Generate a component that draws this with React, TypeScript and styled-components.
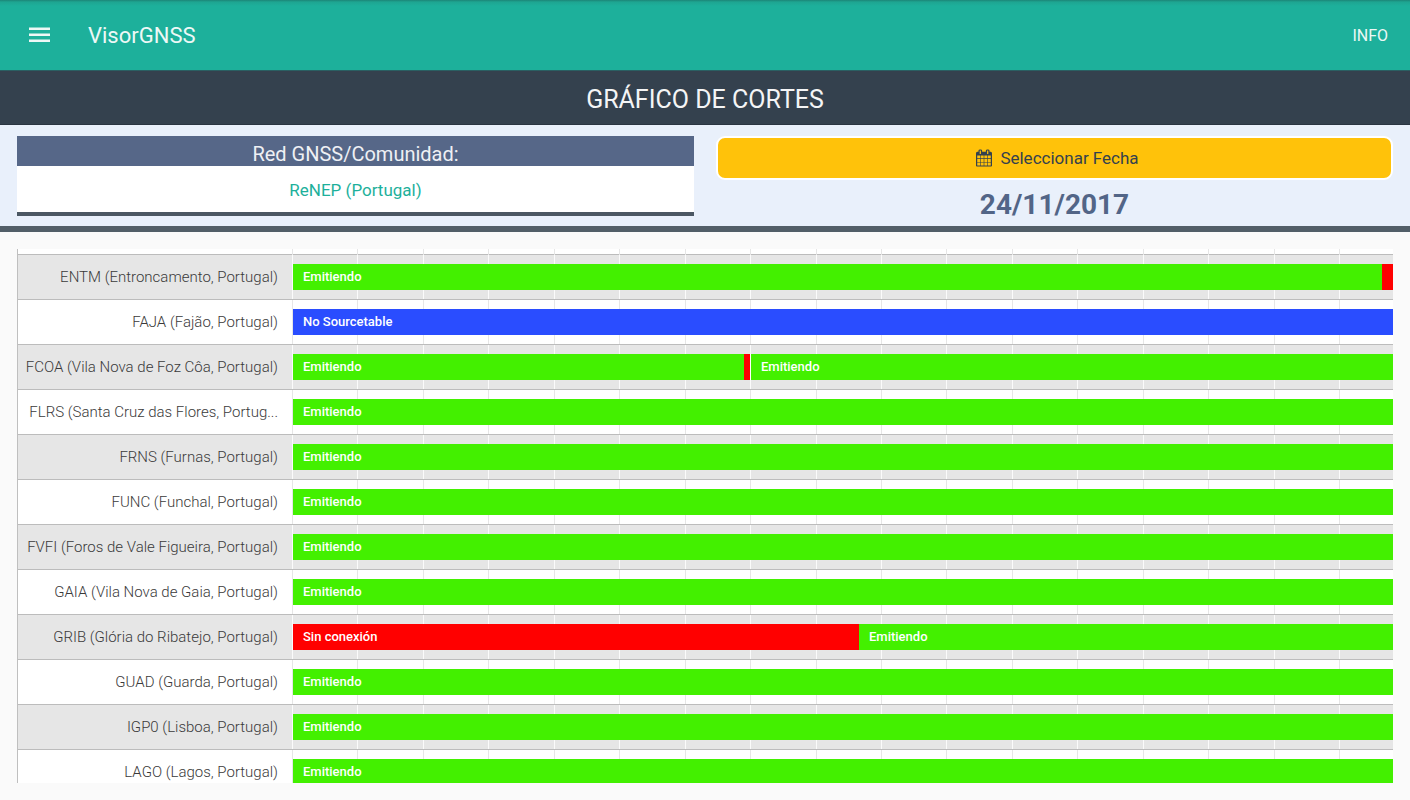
import React from "react";
import styled, { createGlobalStyle } from "styled-components";

const GlobalStyle = createGlobalStyle`
  * { box-sizing: border-box; }
  body {
    margin: 0;
    background: #fafafa;
    font-family: Roboto, "Liberation Sans", sans-serif;
  }
`;

const Page = styled.div`
  display: flex;
  flex-direction: column;
  height: 100vh;
`;

const Toolbar = styled.header`
  flex: none;
  display: flex;
  align-items: center;
  height: 70px;
  padding: 0 22px 0 28px;
  color: #edf8f6;
  background: linear-gradient(#1c8577 0, #1ea591 2px, #1db09b 6px);
`;

const ToolbarButton = styled.button`
  display: flex;
  padding: 0;
  border: 0;
  background: none;
  color: inherit;
  font: inherit;
  font-size: 16px;
  cursor: pointer;
`;

const AppName = styled.span`
  flex: 1;
  margin-left: 37px;
  padding-top: 2px;
  font-size: 22px;
  line-height: 28px;
`;

const PageTitle = styled.h1`
  flex: none;
  margin: 0;
  padding: 2px 0 0;
  height: 55px;
  border-top: 1px solid #2a5f62;
  border-bottom: 1px solid #2a3541;
  background: #34414e;
  color: #f4f5f6;
  font-size: 25px;
  font-weight: 400;
  line-height: 54px;
  text-align: center;
`;

const Filters = styled.section`
  flex: none;
  display: grid;
  grid-template-columns: 1fr 1fr;
  gap: 22px;
  padding: 11px 17px 10px;
  border-bottom: 6px solid #525e68;
  background: #e9f0fb;
`;

const NetworkField = styled.div`
  display: flex;
  flex-direction: column;
  border-bottom: 4px solid #4b5763;
  background: #fff;
`;

const NetworkLabel = styled.label`
  height: 30px;
  padding-top: 3px;
  background: #566788;
  color: #eef0f4;
  font-size: 20px;
  line-height: 30px;
  text-align: center;
`;

const NetworkSelect = styled.select`
  appearance: none;
  height: 46px;
  padding: 2px 0 0;
  border: 0;
  background: #fff;
  color: #1db09b;
  font: inherit;
  font-size: 17px;
  text-align: center;
  text-align-last: center;
`;

const DateField = styled.div`
  display: flex;
  flex-direction: column;
`;

const DateButton = styled.button`
  display: flex;
  align-items: center;
  justify-content: center;
  gap: 8px;
  height: 44px;
  padding: 0 0 0 6px;
  border: 2px solid #fff;
  border-radius: 9px;
  background: #ffc20a;
  color: #34414e;
  font: inherit;
  font-size: 17px;
  cursor: pointer;
`;

const SelectedDate = styled.strong`
  height: 36px;
  padding-top: 7px;
  color: #526587;
  font-size: 28px;
  font-weight: 700;
  line-height: 36px;
  text-align: center;
`;

const Chart = styled.main`
  flex: 1;
  min-height: 0;
  margin: 17px;
  overflow-y: auto;
  scrollbar-width: none;
  border-left: 1px solid #bfbfbf;
`;

const RowList = styled.ul`
  margin: 0;
  padding: 0;
  list-style: none;
`;

const Row = styled.li<{ $shaded: boolean }>`
  --line: ${(p) => (p.$shaded ? "#fbfbfb" : "#e6e6e6")};
  display: grid;
  grid-template-columns: 274px 1fr;
  height: 45px;
  border-top: 1px solid #bcbcbc;
  background: ${(p) => (p.$shaded ? "#e6e6e6" : "#fff")};
`;

const TopEdge = styled(Row).attrs({ as: "div", "aria-hidden": true })`
  height: 5px;
  border-top: 0;
`;

const StationName = styled.span`
  padding: 0 14px 0 2px;
  overflow: hidden;
  color: #3a3a3a;
  font-size: 15px;
  font-weight: 300;
  line-height: 44px;
  text-align: right;
  text-overflow: ellipsis;
  white-space: nowrap;
`;

const Track = styled.div`
  display: flex;
  padding: 9px 0 9px 1px;
  background: repeating-linear-gradient(
    to right,
    var(--line) 0 1px,
    transparent 1px 5.944%
  );
`;

type Status = "on" | "off" | "missing";

const statusColor: Record<Status, string> = {
  on: "#43f000",
  off: "#ff0000",
  missing: "#2a4dff",
};

const Bar = styled.span<{ $status: Status; $share: number; $gap?: boolean }>`
  flex: ${(p) => p.$share} 1 0;
  min-width: 0;
  overflow: hidden;
  border-right: ${(p) => (p.$gap ? "1px solid #fff" : "0")};
  background: ${(p) => statusColor[p.$status]};
  color: #fff;
  font-size: 13px;
  font-weight: 500;
  line-height: 26px;
  text-indent: 10px;
  white-space: nowrap;
`;

type Segment = { status: Status; share: number; text?: string; gap?: boolean };

const allDay: Segment[] = [{ status: "on", share: 1100, text: "Emitiendo" }];

const stations: { name: string; segments: Segment[] }[] = [
  {
    name: "ENTM (Entroncamento, Portugal)",
    segments: [
      { status: "on", share: 1089, text: "Emitiendo" },
      { status: "off", share: 11 },
    ],
  },
  {
    name: "FAJA (Fajão, Portugal)",
    segments: [{ status: "missing", share: 1100, text: "No Sourcetable" }],
  },
  {
    name: "FCOA (Vila Nova de Foz Côa, Portugal)",
    segments: [
      { status: "on", share: 451, text: "Emitiendo" },
      { status: "off", share: 6, gap: true },
      { status: "on", share: 642, text: "Emitiendo" },
    ],
  },
  { name: "FLRS (Santa Cruz das Flores, Portug...", segments: allDay },
  { name: "FRNS (Furnas, Portugal)", segments: allDay },
  { name: "FUNC (Funchal, Portugal)", segments: allDay },
  { name: "FVFI (Foros de Vale Figueira, Portugal)", segments: allDay },
  { name: "GAIA (Vila Nova de Gaia, Portugal)", segments: allDay },
  {
    name: "GRIB (Glória do Ribatejo, Portugal)",
    segments: [
      { status: "off", share: 566, text: "Sin conexión" },
      { status: "on", share: 534, text: "Emitiendo" },
    ],
  },
  { name: "GUAD (Guarda, Portugal)", segments: allDay },
  { name: "IGP0 (Lisboa, Portugal)", segments: allDay },
  { name: "LAGO (Lagos, Portugal)", segments: allDay },
];

const MenuIcon = () => (
  <svg width="23" height="18" viewBox="0 0 23 18" fill="currentColor" aria-hidden="true">
    <path d="M1 1.5h21v2.6H1zM1 7.5h21v2.6H1zM1 13.5h21v2.6H1z" />
  </svg>
);

const CalendarIcon = () => (
  <svg width="16" height="18" viewBox="64 0 1664 1792" fill="currentColor" aria-hidden="true">
    <path d="M192 1664h288v-288h-288v288zm352 0h320v-288h-320v288zm-352-352h288v-320h-288v320zm352 0h320v-320h-320v320zm-352-384h288v-288h-288v288zm736 736h320v-288h-320v288zm-384-736h320v-288h-320v288zm768 736h288v-288h-288v288zm-384-352h320v-320h-320v320zm-352-864v-288q0-13-9.5-22.5t-22.5-9.5h-64q-13 0-22.5 9.5t-9.5 22.5v288q0 13 9.5 22.5t22.5 9.5h64q13 0 22.5-9.5t9.5-22.5zm736 864h288v-320h-288v320zm-384-384h320v-288h-320v288zm384 0h288v-288h-288v288zm32-480v-288q0-13-9.5-22.5t-22.5-9.5h-64q-13 0-22.5 9.5t-9.5 22.5v288q0 13 9.5 22.5t22.5 9.5h64q13 0 22.5-9.5t9.5-22.5zm384-64v1280q0 52-38 90t-90 38h-1408q-52 0-90-38t-38-90v-1280q0-52 38-90t90-38h128v-96q0-66 47-113t113-47h64q66 0 113 47t47 113v96h384v-96q0-66 47-113t113-47h64q66 0 113 47t47 113v96h128q52 0 90 38t38 90z" />
  </svg>
);

export default function App() {
  return (
    <Page>
      <GlobalStyle />
      <Toolbar>
        <ToolbarButton type="button" aria-label="Menú">
          <MenuIcon />
        </ToolbarButton>
        <AppName>VisorGNSS</AppName>
        <ToolbarButton type="button">INFO</ToolbarButton>
      </Toolbar>
      <PageTitle>GRÁFICO DE CORTES</PageTitle>
      <Filters>
        <NetworkField>
          <NetworkLabel htmlFor="network">Red GNSS/Comunidad:</NetworkLabel>
          <NetworkSelect id="network">
            <option>ReNEP (Portugal)</option>
          </NetworkSelect>
        </NetworkField>
        <DateField>
          <DateButton type="button">
            <CalendarIcon />
            Seleccionar Fecha
          </DateButton>
          <SelectedDate>24/11/2017</SelectedDate>
        </DateField>
      </Filters>
      <Chart>
        <TopEdge $shaded={false}>
          <span />
          <Track />
        </TopEdge>
        <RowList>
          {stations.map((station, i) => (
            <Row key={station.name} $shaded={i % 2 === 0}>
              <StationName>{station.name}</StationName>
              <Track>
                {station.segments.map((s, j) => (
                  <Bar key={j} $status={s.status} $share={s.share} $gap={s.gap}>
                    {s.text}
                  </Bar>
                ))}
              </Track>
            </Row>
          ))}
        </RowList>
      </Chart>
    </Page>
  );
}
